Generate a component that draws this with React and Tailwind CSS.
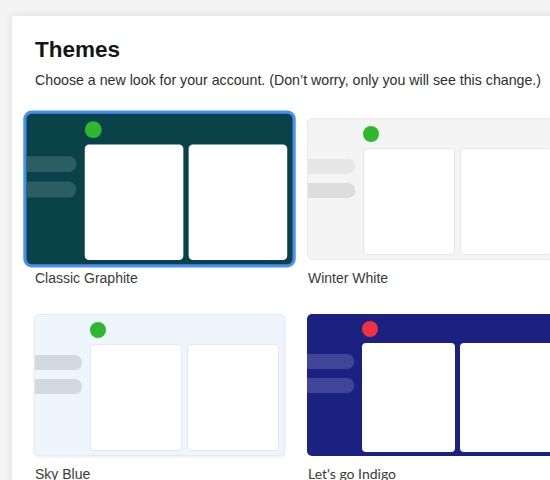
import React from "react";

const themes = [
  {
    name: "Classic Graphite",
    selected: true,
    card: "bg-[#0a424a]",
    bar: "bg-[#2c5d63]",
    bar2: "bg-[#2c5d63]",
    pane: "bg-white",
    dot: "bg-[#2fb82d]",
    label: "",
  },
  {
    name: "Winter White",
    card: "bg-[#f4f4f4] border border-[#eaeaea]",
    bar: "bg-[#e7e7e7]",
    bar2: "bg-[#dddddd]",
    pane: "bg-white border border-[#e6e6e6]",
    dot: "bg-[#2fb82d]",
    label: "",
  },
  {
    name: "Sky Blue",
    card: "bg-[#eef5fd] border border-[#e3ebf5] shadow-[0_1px_3px_rgba(0,0,0,0.08)]",
    bar: "bg-[#d3d9e1]",
    bar2: "bg-[#d3d9e1]",
    pane: "bg-white border border-[#e2e8f0]",
    dot: "bg-[#2fb82d]",
    label: "",
  },
  {
    name: "Let's go Indigo",
    card: "bg-[#1b2181]",
    bar: "bg-[#3f4598]",
    bar2: "bg-[#3f4598]",
    pane: "bg-white",
    dot: "bg-[#ef3142]",
    label: "font-['Lato',sans-serif]",
  },
];

function ThemeCard({ theme }) {
  const ring = theme.selected
    ? "scale-[1.06] ring-[3px] ring-[#4a8ef2]"
    : "";
  return (
    <div className="flex flex-col">
      <div
        className={`flex h-[142px] w-[251px] overflow-hidden rounded-[5px] ${theme.card} ${ring}`}
      >
        {/* sidebar */}
        <div className="flex w-[47px] shrink-0 flex-col gap-[9px] pt-[40px]">
          <div className={`h-[15px] rounded-r-[7px] ${theme.bar}`} />
          <div className={`h-[15px] rounded-r-[7px] ${theme.bar2}`} />
        </div>
        {/* main area */}
        <div className="ml-[8px] flex flex-1 flex-col pb-[4px] pr-[5px] pt-[7px]">
          <div className={`h-4 w-4 rounded-full ${theme.dot}`} />
          <div className="mt-[6px] flex flex-1 gap-[5px]">
            <div className={`flex-1 rounded-[4px] ${theme.pane}`} />
            <div className={`flex-1 rounded-[4px] ${theme.pane}`} />
          </div>
        </div>
      </div>
      <div
        className={`mt-[9px] pl-px text-[14px] leading-[18px] text-[#3a3a3a] ${theme.label}`}
      >
        {theme.name}
      </div>
    </div>
  );
}

export default function App() {
  return (
    <div className="h-[480px] w-[550px] overflow-hidden bg-[#f4f4f4] pl-[12px] pt-[16px] font-['Liberation_Sans',Arial,sans-serif]">
      <div className="h-[520px] w-[600px] rounded-[2px] bg-white pl-[22px] pt-[20px] shadow-[0_0_8px_rgba(0,0,0,0.10)]">
        <h1 className="pl-px text-[22.5px] font-bold leading-[28px] text-[#161616]">
          Themes
        </h1>
        <p className="mt-[6px] pl-px text-[14.2px] leading-[20px] text-[#2e2e2e]">
          Choose a new look for your account. (Don’t worry, only you will see
          this change.)
        </p>
        <div className="mt-[28px] grid grid-cols-[251px_251px] gap-x-[22px] gap-y-[27px]">
          {themes.map((t) => (
            <ThemeCard key={t.name} theme={t} />
          ))}
        </div>
      </div>
    </div>
  );
}
